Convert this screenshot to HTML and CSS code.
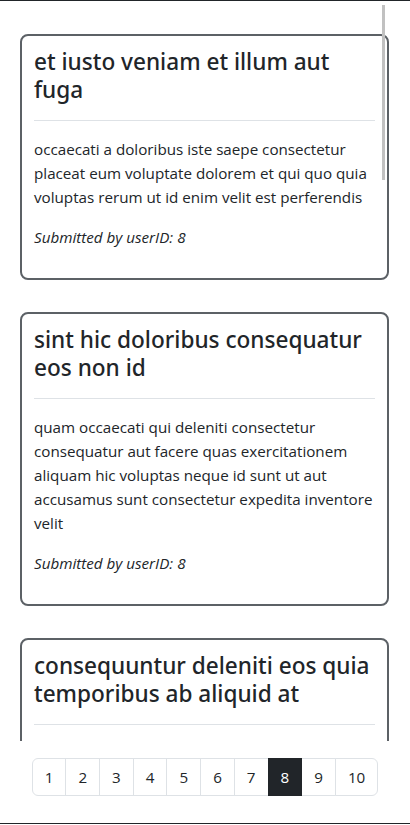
FILE: index.html
```html
<!DOCTYPE html>
<html lang="en">
<head>
<meta charset="utf-8">
<title>Posts</title>
<link rel="stylesheet" href="styles.css">
</head>
<body>
<div class="page">
  <div class="feed">
    <div class="feed-inner">
      <div class="card">
        <h3 class="card-title">et iusto veniam et illum aut fuga</h3>
        <hr class="sep">
        <p class="card-text">occaecati a doloribus iste saepe consectetur placeat eum voluptate dolorem et qui quo quia voluptas rerum ut id enim velit est perferendis</p>
        <p class="card-meta">Submitted by userID: 8</p>
      </div>
      <div class="card">
        <h3 class="card-title">sint hic doloribus consequatur eos non id</h3>
        <hr class="sep">
        <p class="card-text">quam occaecati qui deleniti consectetur consequatur aut facere quas exercitationem aliquam hic voluptas neque id sunt ut aut accusamus sunt consectetur expedita inventore velit</p>
        <p class="card-meta">Submitted by userID: 8</p>
      </div>
      <div class="card">
        <h3 class="card-title">consequuntur deleniti eos quia temporibus ab aliquid at</h3>
        <hr class="sep">
        <p class="card-text">voluptatem cumque tenetur consequatur expedita ipsum nemo quia explicabo aut eum minima consequatur tempore cumque quae est et et in consequuntur voluptatem voluptates aut</p>
        <p class="card-meta">Submitted by userID: 8</p>
      </div>
    </div>
    <div class="thumb"></div>
  </div>
  <nav class="pager">
    <ul class="pagination">
      <li class="page-item">1</li>
      <li class="page-item">2</li>
      <li class="page-item">3</li>
      <li class="page-item">4</li>
      <li class="page-item">5</li>
      <li class="page-item">6</li>
      <li class="page-item">7</li>
      <li class="page-item active">8</li>
      <li class="page-item">9</li>
      <li class="page-item">10</li>
    </ul>
  </nav>
</div>
</body>
</html>
```
FILE: styles.css
```css
* { box-sizing: border-box; }
html, body { margin: 0; padding: 0; background: #fff; }
body {
  font-family: "Open Sans", "Noto Sans", "Liberation Sans", sans-serif;
  font-size: 15.2px;
  line-height: 24px;
  color: #212529;
}
.page {
  height: 824px;
  border-top: 1px solid #212529;
  border-bottom: 1px solid #212529;
  display: flex;
  flex-direction: column;
}
.feed {
  position: relative;
  height: 740px;
  flex: 0 0 740px;
  overflow: hidden;
}
.feed-inner {
  padding: 33px 21px 0 20px;
}
.card {
  border: 2px solid #5c6166;
  border-radius: 8px;
  padding: 12px 12px 13px;
  margin-bottom: 32px;
}
.card-title {
  margin: 0;
  font-family: "Noto Sans", "Open Sans", sans-serif;
  font-size: 22.6px;
  font-weight: 500;
  line-height: 28px;
}
.sep {
  margin: 16px 0;
  border: 0;
  border-top: 1px solid #dee2e6;
}
.card-text {
  margin: 0 0 16px;
}
.card-meta {
  margin: 0 0 16px;
  font-style: italic;
}
.thumb {
  position: absolute;
  top: 4px;
  left: 382px;
  width: 3px;
  height: 175px;
  background: #c1c1c1;
}
.pager {
  margin-top: 17px;
  display: flex;
  justify-content: center;
}
.pagination {
  list-style: none;
  margin: 0;
  padding: 0;
  display: flex;
}
.page-item {
  padding: 6px 12px;
  line-height: 24px;
  border: 1px solid #dee2e6;
  margin-left: -1px;
  color: #212529;
  background: #fff;
}
.page-item:first-child {
  margin-left: 0;
  border-radius: 6px 0 0 6px;
}
.page-item:last-child {
  border-radius: 0 6px 6px 0;
}
.page-item.active {
  background: #212529;
  border-color: #212529;
  color: #fff;
  position: relative;
}
```
